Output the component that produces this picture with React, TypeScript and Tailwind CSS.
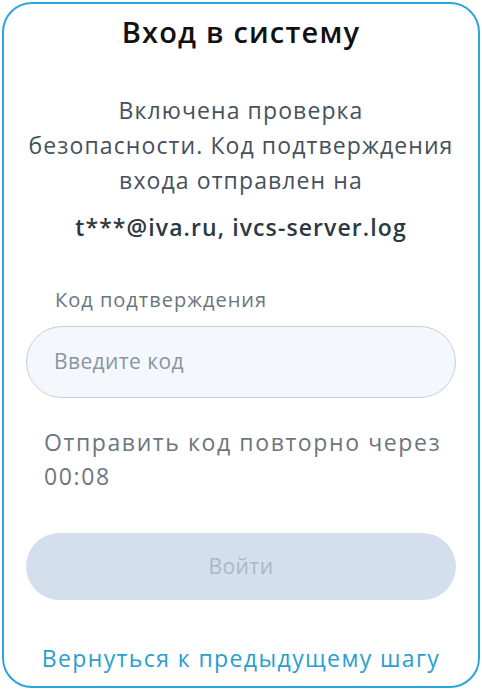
import React from "react";

export default function App() {
  return (
    <div className="w-[482px] h-[691px] bg-white p-[2px]" style={{ fontFamily: '"Open Sans", sans-serif' }}>
      <div className="h-[686px] rounded-[30px] border-2 border-[#2aa6dd] flex flex-col items-center px-[22px]">
        <h1 className="mt-[8px] text-[29px] leading-[40px] font-semibold tracking-[1.2px] text-[#111111] whitespace-nowrap">Вход в систему</h1>
        <p className="mt-[41px] text-center text-[23px] leading-[35px] tracking-[1.1px] text-[#46515d] whitespace-nowrap">
          Включена проверка
          <br />
          безопасности. Код подтверждения
          <br />
          входа отправлен на
        </p>
        <p className="mt-[12px] text-center text-[23px] leading-[35px] tracking-[1.1px] font-semibold text-[#2b3845] whitespace-nowrap">
          t***@iva.ru, ivcs-server.log
        </p>
        <div className="w-full mt-[41px] flex flex-col">
          <label className="pl-[29px] text-[20px] leading-[28px] tracking-[1px] text-[#6b7581] whitespace-nowrap">Код подтверждения</label>
          <div className="mt-[12px] h-[72px] rounded-full border border-[#c3cfdb] bg-[#f4f8fc] flex items-center pl-[27px]">
            <span className="text-[21px] tracking-[0.4px] text-[#8a95a0]">Введите код</span>
          </div>
          <p className="mt-[27px] pl-[18px] text-[23px] leading-[34px] tracking-[1.6px] text-[#6d7680] whitespace-nowrap">
            Отправить код повторно через
            <br />
            00:08
          </p>
          <button className="mt-[40px] h-[67px] rounded-full bg-[#d3dfec] flex items-center justify-center text-[21px] tracking-[0.4px] text-[#a8b8c8]">
            Войти
          </button>
        </div>
        <a className="mt-[41px] text-[23px] leading-[34px] tracking-[1.4px] text-[#2a9ed0] whitespace-nowrap">Вернуться к предыдущему шагу</a>
      </div>
    </div>
  );
}
